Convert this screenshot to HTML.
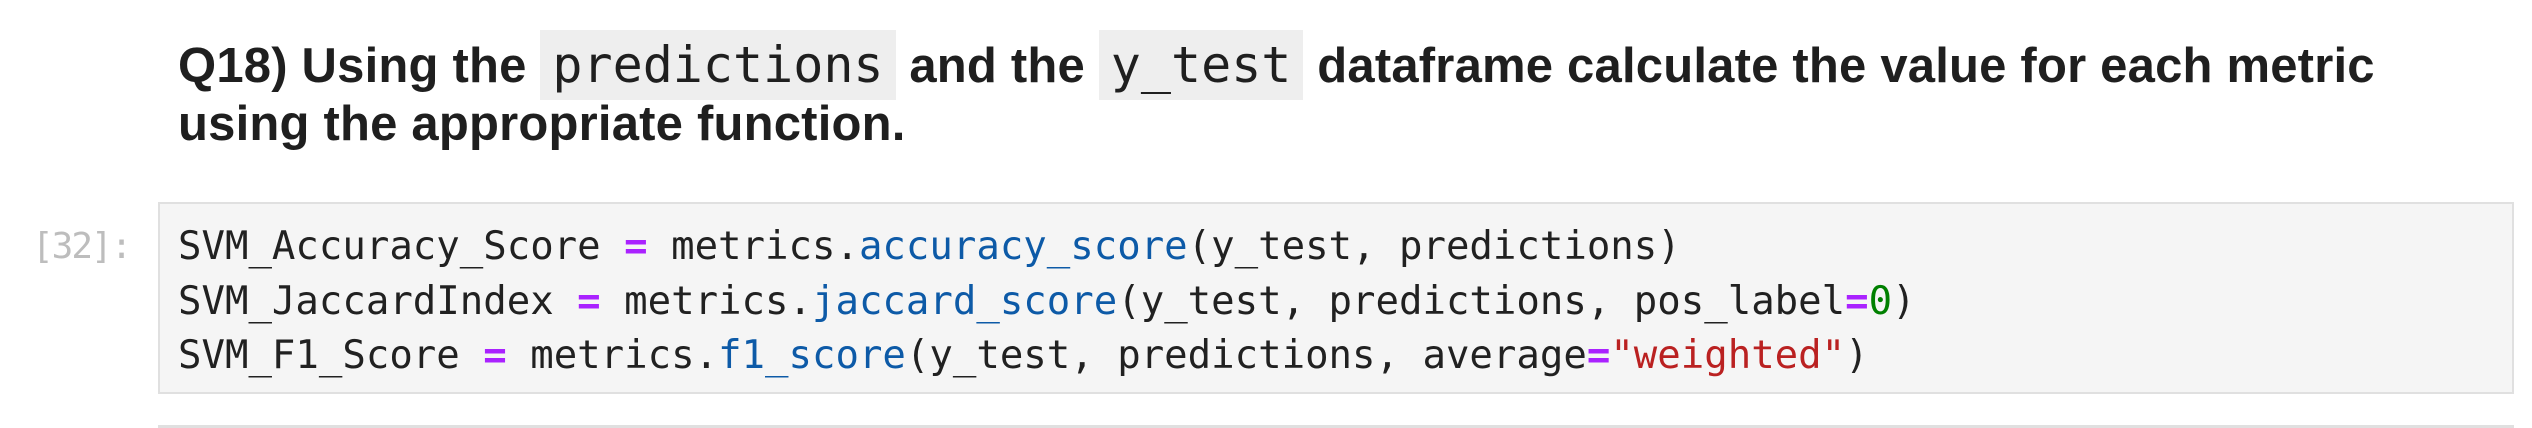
<!DOCTYPE html>
<html><head><meta charset="utf-8"><style>
body{margin:0;width:2532px;height:428px;background:#fff;position:relative;overflow:hidden;font-family:"Liberation Sans",sans-serif;}
.h{position:absolute;left:178px;top:36px;width:2380px;font-size:49px;font-weight:bold;color:#1f1f1f;line-height:58px;letter-spacing:0.2px}
.h code{font-family:"DejaVu Sans Mono","Liberation Mono",monospace;font-weight:normal;background:#eeeeee;padding:6px 12px;font-size:50px;letter-spacing:0}
.box{position:absolute;left:158px;top:202px;width:2352px;height:188px;background:#f5f5f5;border:2px solid #e0e0e0}
.code{position:absolute;left:178px;top:220px;font-family:"DejaVu Sans Mono","Liberation Mono",monospace;font-size:39px;line-height:54.5px;color:#212121;white-space:pre}
.p{position:absolute;left:32px;top:220px;font-family:"DejaVu Sans Mono","Liberation Mono",monospace;font-size:36px;line-height:54.5px;color:#bdbdbd;white-space:pre;letter-spacing:-2px}
.o{color:#aa22ff;font-weight:bold}.f{color:#0d5aa7}.n{color:#008000}.s{color:#ba2121}
.line{position:absolute;left:158px;top:425px;width:2356px;height:3px;background:#e0e0e0}
</style></head><body>
<div class="h">Q18) Using the <code>predictions</code> and the <code>y_test</code> dataframe calculate the value for each metric<br>using the appropriate function.</div>
<div class="box"></div>
<div class="p">[32]:</div>
<div class="code">SVM_Accuracy_Score <span class="o">=</span> metrics.<span class="f">accuracy_score</span>(y_test, predictions)
SVM_JaccardIndex <span class="o">=</span> metrics.<span class="f">jaccard_score</span>(y_test, predictions, pos_label<span class="o">=</span><span class="n">0</span>)
SVM_F1_Score <span class="o">=</span> metrics.<span class="f">f1_score</span>(y_test, predictions, average<span class="o">=</span><span class="s">"weighted"</span>)</div>
<div class="line"></div>
</body></html>
